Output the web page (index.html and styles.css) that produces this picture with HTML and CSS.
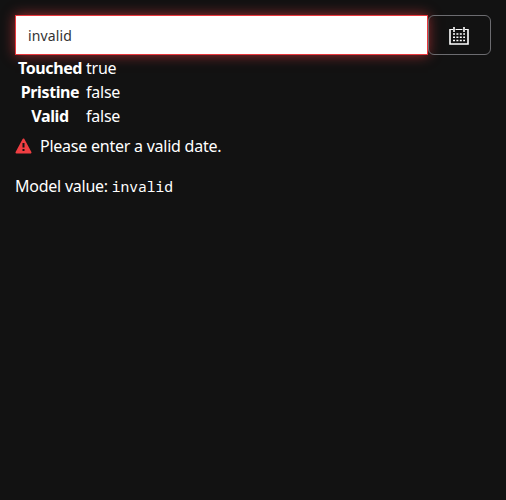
FILE: index.html
```html
<!DOCTYPE html>
<html lang="en">
<head>
<meta charset="utf-8">
<title>Date field</title>
<link rel="stylesheet" href="styles.css">
</head>
<body>
<div class="field">
<input class="field-input" type="text" value="invalid">
<button class="field-button" type="button" aria-label="Open calendar">
<svg class="calendar" width="20" height="18" viewBox="0 0 20 18"><path d="M1 2.5H4M6.5 2.5H13.5M16 2.5H19" stroke="#fff"/><path d="M1 2V17H19V2" fill="none" stroke="#fff" stroke-width="1.6"/><path d="M5 0v5M15 0v5" stroke="#fff" stroke-width="1.6"/><path d="M4 7h12M4 10.3h12M4 13.5h12" stroke="#fff" stroke-width="1.5" stroke-dasharray="2 1.4"/></svg>
</button>
</div>
<table class="state">
<tr><th>Touched</th><td>true</td></tr>
<tr><th>Pristine</th><td>false</td></tr>
<tr><th>Valid</th><td>false</td></tr>
</table>
<div class="error">
<svg class="warning" width="17" height="16" viewBox="0 0 17 16"><path d="M8.5 1.5L15.5 14.5H1.5Z" fill="#ef3e42" stroke="#ef3e42" stroke-width="2" stroke-linejoin="round"/><path d="M8.5 5v4.5M8.5 11v2" stroke="#121212" stroke-width="2"/></svg>
<span>Please enter a valid date.</span>
</div>
<p class="model">Model value: <code>invalid</code></p>
</body>
</html>
```
FILE: styles.css
```css
* { box-sizing: border-box; }
body { margin: 0; padding: 15px; background: #121212; color: #fff; font: 16px/24px "Noto Sans", sans-serif; letter-spacing: -0.24px; }
.field { display: flex; height: 40px; }
.field-input { flex: 1; min-width: 0; padding: 0 12px; border: 1px solid #e8383d; border-radius: 0; background: #fff; color: #333; font: 14px "Noto Sans", sans-serif; letter-spacing: 0.15px; box-shadow: 0 0 12px rgba(239, 62, 66, 0.65); outline: 0; }
.field-button { display: flex; align-items: center; justify-content: center; width: 63px; padding: 2px 2px 0 0; border: 1px solid #6c6c70; border-radius: 6px; background: transparent; }
.state { border-spacing: 2px 0; margin-top: 1px; }
.state th, .state td { padding: 0 1px; }
.state th { letter-spacing: -0.4px; }
.error { display: flex; align-items: center; gap: 8px; margin-top: 6px; }
.model { margin: 16px 0 0; }
code { font: 14.6px "Noto Sans Mono", "DejaVu Sans Mono", monospace; letter-spacing: 0; }
```
